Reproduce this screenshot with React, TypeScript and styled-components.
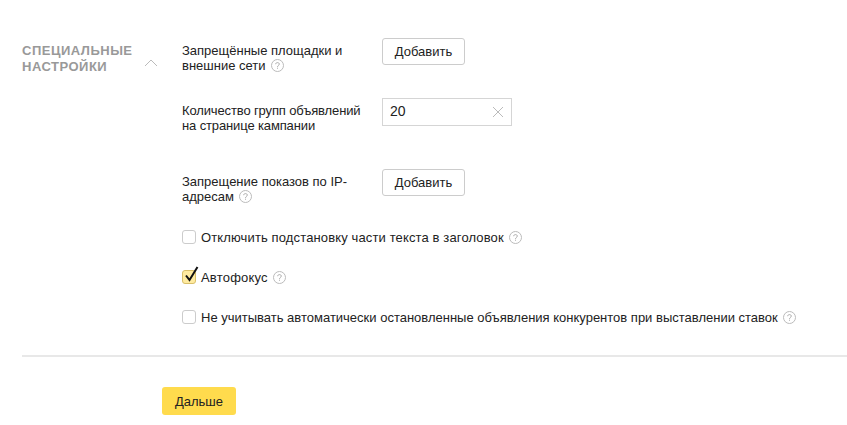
import React from "react";
import styled, { createGlobalStyle } from "styled-components";

const Global = createGlobalStyle`
  html, body { margin: 0; padding: 0; background: #fff; }
  body { font-family: "Liberation Sans", Arial, sans-serif; font-size: 13px; color: #222; overflow: hidden; }
`;

const Page = styled.div`
  width: 847px;
  height: 425px;
  padding: 38px 0 0 22px;
  box-sizing: border-box;
`;

const Section = styled.section`
  display: flex;
  height: 317px;
`;

const Side = styled.div`
  width: 160px;
  flex: none;
  display: flex;
  align-items: flex-start;
  padding-top: 5px;
`;

const Title = styled.h2`
  margin: 0;
  width: 122px;
  font-size: 13px;
  line-height: 16px;
  font-weight: 700;
  letter-spacing: 0.5px;
  color: #999;
  text-transform: uppercase;
`;

const Chevron = styled.svg`
  width: 14px;
  height: 8px;
  margin-top: 16px;
  flex: none;
`;

const Body = styled.div`
  display: flex;
  flex-direction: column;
`;

const Row = styled.div<{ $h: number }>`
  display: flex;
  height: ${(p) => p.$h}px;
  align-items: flex-start;
`;

const Label = styled.div<{ $track?: number }>`
  width: 200px;
  flex: none;
  box-sizing: border-box;
  padding: 5px 10px 0 0;
  line-height: 15px;
  letter-spacing: ${(p) => p.$track ?? 0}px;
`;

const Help = styled.svg`
  width: 13px;
  height: 13px;
  flex: none;
  margin-left: 5px;
  vertical-align: -2px;
`;

const Button = styled.button`
  height: 27px;
  width: 83px;
  padding: 0;
  background: #fff;
  border: 1px solid #ccc;
  border-radius: 3px;
  font: 13px "Liberation Sans", Arial, sans-serif;
  color: #222;
`;

const InputBox = styled.div`
  width: 130px;
  height: 28px;
  box-sizing: border-box;
  border: 1px solid #d5d5d5;
  display: flex;
  align-items: center;
  justify-content: space-between;
  padding: 0 8px 2px 7px;
  font-size: 14px;
`;

const Clear = styled.svg`
  width: 10px;
  height: 10px;
  margin-top: 2px;
`;

const CheckRow = styled.label<{ $h: number; $track?: number }>`
  display: flex;
  align-items: center;
  height: 20px;
  margin-bottom: ${(p) => p.$h}px;
  letter-spacing: ${(p) => p.$track ?? 0}px;
`;

const Box = styled.span<{ $on?: boolean }>`
  position: relative;
  box-sizing: border-box;
  width: 14px;
  height: 14px;
  flex: none;
  border: 1px solid ${(p) => (p.$on ? "#d9bf6a" : "#ccc")};
  border-radius: 3px;
  background: ${(p) => (p.$on ? "#ffeba0" : "#fff")};
  margin-right: 5px;
`;

const Tick = styled.svg`
  position: absolute;
  left: 1px;
  top: -5px;
  width: 15px;
  height: 17px;
`;

const Divider = styled.hr`
  margin: 0;
  border: 0;
  height: 2px;
  background: #e8e8e8;
`;

const Footer = styled.div`
  padding: 30px 0 0 140px;
`;

const Primary = styled.button`
  width: 74px;
  height: 28px;
  padding: 0;
  border: 0;
  border-radius: 3px;
  background: #ffdb4d;
  font: 13px "Liberation Sans", Arial, sans-serif;
  color: #222;
`;

const HelpIcon = () => (
  <Help viewBox="0 0 13 13">
    <circle cx="6.5" cy="6.5" r="6" fill="none" stroke="#bbb" />
    <path d="M4.7 5.2C4.7 4.1 5.5 3.6 6.5 3.6s1.8.6 1.8 1.5c0 1.3-1.8 1.4-1.8 2.8" fill="none" stroke="#aaa" />
    <rect x="6" y="8.7" width="1" height="1" fill="#aaa" />
  </Help>
);

export default function App() {
  return (
    <Page>
      <Global />
      <Section>
        <Side>
          <Title>Специальные настройки</Title>
          <Chevron viewBox="0 0 14 8">
            <path d="M1 7l6-6 6 6" fill="none" stroke="#bbb" />
          </Chevron>
        </Side>
        <Body>
          <Row $h={60}>
            <Label>
              Запрещённые площадки и внешние сети
              <HelpIcon />
            </Label>
            <Button>Добавить</Button>
          </Row>
          <Row $h={71}>
            <Label $track={-0.13}>Количество групп объявлений на странице кампании</Label>
            <InputBox>
              20
              <Clear viewBox="0 0 10 10">
                <path d="M0 0l10 10M10 0L0 10" stroke="#bbb" fill="none" />
              </Clear>
            </InputBox>
          </Row>
          <Row $h={58}>
            <Label>
              Запрещение показов по IP-адресам
              <HelpIcon />
            </Label>
            <Button>Добавить</Button>
          </Row>
          <CheckRow $h={20} $track={0.13}>
            <Box />
            Отключить подстановку части текста в заголовок
            <HelpIcon />
          </CheckRow>
          <CheckRow $h={20} $track={0.2}>
            <Box $on>
              <Tick viewBox="0 0 15 17">
                <path d="M2 9.5l3.5 4.5L13.5 1" fill="none" stroke="#111" strokeWidth="2" />
              </Tick>
            </Box>
            Автофокус
            <HelpIcon />
          </CheckRow>
          <CheckRow $h={0}>
            <Box />
            Не учитывать автоматически остановленные объявления конкурентов при выставлении ставок
            <HelpIcon />
          </CheckRow>
        </Body>
      </Section>
      <Divider />
      <Footer>
        <Primary>Дальше</Primary>
      </Footer>
    </Page>
  );
}
